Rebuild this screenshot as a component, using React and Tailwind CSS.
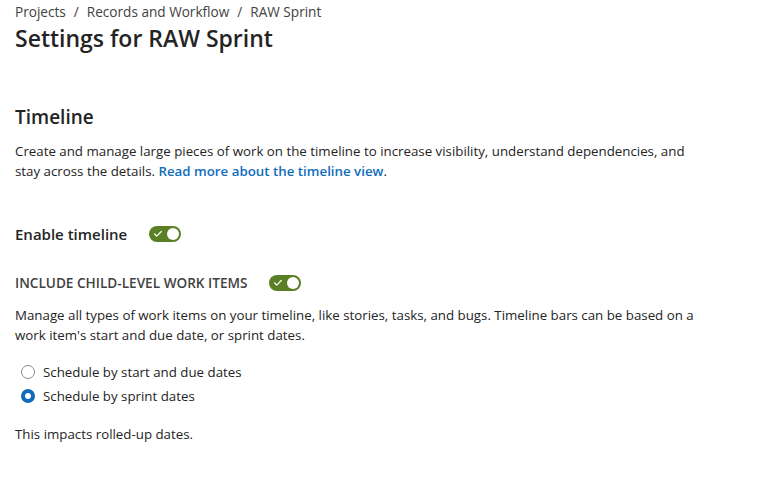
import { Check } from 'lucide-react';

const Toggle = () => (
  <span className="inline-flex items-center justify-between w-[32px] h-[16px] rounded-full bg-[#5b7f24] pl-[4px] pr-[2px]">
    <Check className="w-[10px] h-[10px] text-white" strokeWidth={3} />
    <span className="w-[12px] h-[12px] rounded-full bg-white" />
  </span>
);

const Radio = ({ checked, label }) => (
  <label className="flex items-center gap-[8px] h-[24px]">
    {checked ? (
      <span className="w-[14px] h-[14px] rounded-full bg-[#0f6cbd] flex items-center justify-center">
        <span className="w-[6px] h-[6px] rounded-full bg-white" />
      </span>
    ) : (
      <span className="w-[14px] h-[14px] rounded-full border border-[#8a8a8a]" />
    )}
    <span>{label}</span>
  </label>
);

export default function App() {
  return (
    <div
      className="min-h-screen bg-white text-[#242424] px-[15px] pt-[2px] text-[13.3px] leading-[20px]"
      style={{ fontFamily: '"Open Sans", "Noto Sans", sans-serif' }}
    >
      <nav className="flex items-center gap-[8px] text-[13.6px] text-[#424242]">
        <span>Projects</span>
        <span>/</span>
        <span>Records and Workflow</span>
        <span>/</span>
        <span>RAW Sprint</span>
      </nav>
      <h1 className="text-[23px] leading-[32px] font-semibold">Settings for RAW Sprint</h1>

      <h2 className="text-[19px] leading-[28px] font-semibold mt-[49px]">Timeline</h2>
      <p className="mt-[10px] max-w-[690px]">
        Create and manage large pieces of work on the timeline to increase visibility, understand dependencies, and
        stay across the details.{' '}
        <a href="#" className="text-[#0f6cbd] font-semibold">Read more about the timeline view</a>.
      </p>

      <div className="flex items-center gap-[22px] mt-[41px] h-[24px]">
        <span className="text-[15px] font-semibold">Enable timeline</span>
        <Toggle />
      </div>

      <div className="flex items-center gap-[22px] mt-[25px] h-[24px]">
        <span className="text-[13.6px] font-semibold text-[#424242]">INCLUDE CHILD-LEVEL WORK ITEMS</span>
        <Toggle />
      </div>

      <p className="mt-[10px] max-w-[690px]">
        Manage all types of work items on your timeline, like stories, tasks, and bugs. Timeline bars can be based on a
        work item's start and due date, or sprint dates.
      </p>

      <div className="mt-[15px] pl-[6px]">
        <Radio label="Schedule by start and due dates" />
        <Radio checked label="Schedule by sprint dates" />
      </div>

      <p className="mt-[16px]">This impacts rolled-up dates.</p>
    </div>
  );
}
